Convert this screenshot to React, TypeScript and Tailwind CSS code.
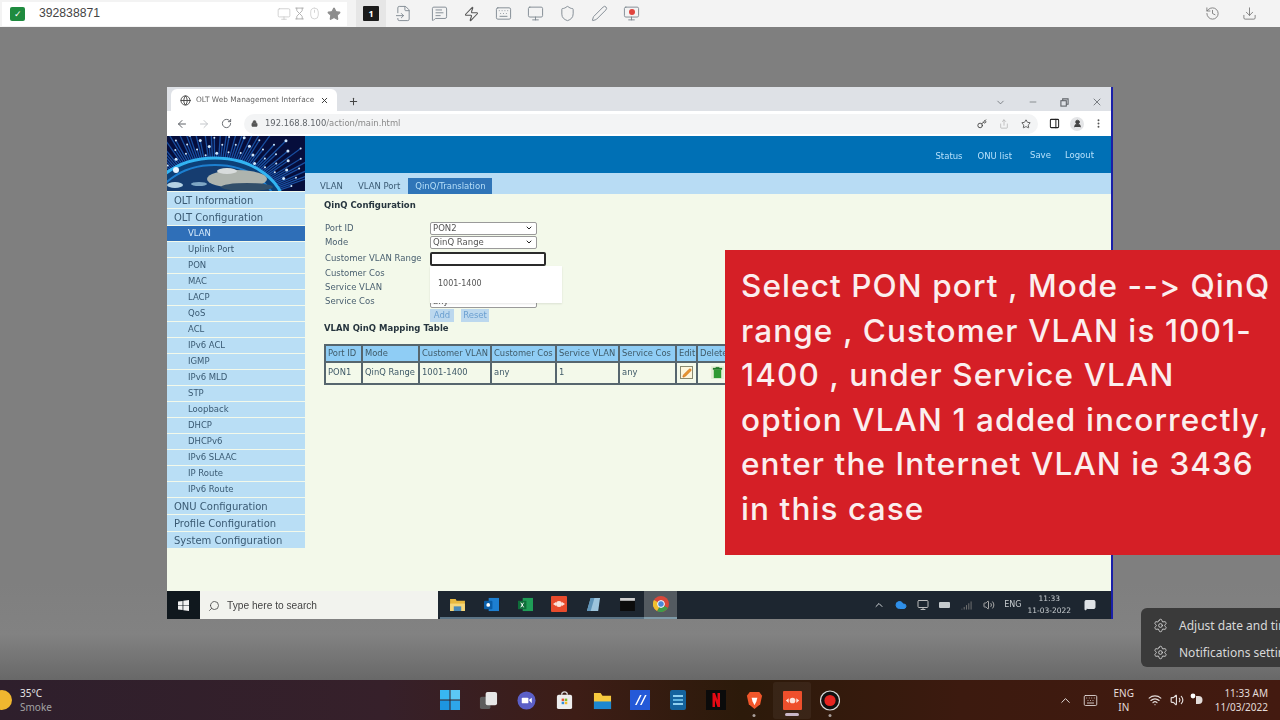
import {
  ArrowLeft,
  ArrowRight,
  ChevronDown,
  ChevronUp,
  Cloud,
  Download,
  Hourglass,
  History,
  Key,
  Lock,
  Monitor,
  MessageSquareText,
  Mouse,
  PanelRight,
  Pen,
  Plus,
  RotateCw,
  Search,
  Settings,
  Share,
  Shield,
  Star,
  UserRound,
  Volume2,
  Wifi,
  X,
  Minus,
  Zap,
  FileInput,
  Keyboard,
  MoreVertical,
  Globe,
  Signal,
  MessageSquare,
} from "lucide-react";

const subItems = [
  "Uplink Port",
  "PON",
  "MAC",
  "LACP",
  "QoS",
  "ACL",
  "IPv6 ACL",
  "IGMP",
  "IPv6 MLD",
  "STP",
  "Loopback",
  "DHCP",
  "DHCPv6",
  "IPv6 SLAAC",
  "IP Route",
  "IPv6 Route",
];

function GlobeBanner() {
  const streaks = [];
  for (let i = 0; i < 90; i++) {
    const a = Math.PI * 1.02 + (i / 90) * Math.PI * 0.86;
    const r2 = 1.06 + ((i * 37) % 23) * 0.032;
    const x1 = 48 + Math.cos(a) * 70;
    const y1 = 75 + Math.sin(a) * 53;
    const x2 = 48 + Math.cos(a) * 70 * r2;
    const y2 = 75 + Math.sin(a) * 53 * r2;
    streaks.push(
      <g key={i}>
        <line x1={x1} y1={y1} x2={x2} y2={y2} stroke="#2169c9" strokeWidth="1.3" opacity="0.7" />
        <circle cx={x2} cy={y2} r={i % 3 === 0 ? 1.5 : 1} fill="#cfe9ff" />
      </g>
    );
  }
  return (
    <svg viewBox="0 0 138 55" className="h-[55px] w-[138px] shrink-0 bg-[#060e3c]">
      <defs>
        <filter id="soft">
          <feGaussianBlur stdDeviation="0.7" />
        </filter>
      </defs>
      <g filter="url(#soft)">
        {streaks}
        <ellipse cx="48" cy="75" rx="70" ry="53" fill="#0f3f77" stroke="#31b4f2" strokeWidth="3" />
        <ellipse cx="48" cy="75" rx="62" ry="46" fill="#123e70" stroke="#1e7fd0" strokeWidth="2" />
        <ellipse cx="70" cy="43" rx="30" ry="9" fill="#aeb4ae" />
        <ellipse cx="60" cy="35" rx="10" ry="3" fill="#d8dcdc" />
        <ellipse cx="80" cy="51" rx="26" ry="4" fill="#33506a" />
        <circle cx="9" cy="34" r="3" fill="#e8f4ff" />
        <ellipse cx="8" cy="49" rx="8" ry="3" fill="#b5d2e4" />
        <ellipse cx="32" cy="48" rx="8" ry="2" fill="#7ea6c4" />
      </g>
    </svg>
  );
}

function TopBarIcons() {
  const cls = "h-[17px] w-[17px] text-[#7d8790]";
  return (
    <div className="flex h-full items-center">
      <div className="flex h-full w-[30px] items-center justify-center bg-[#e6e6e6]">
        <div className="flex h-[15px] w-[16px] items-center justify-center rounded-[1px] bg-[#1b1b1b] text-[9px] font-bold text-white">
          1
        </div>
      </div>
      <div className="ml-[9px] flex items-center gap-[15px]">
        <FileInput className={`${cls} mr-[4px]`} strokeWidth={1.3} />
        <MessageSquareText className={cls} strokeWidth={1.3} />
        <Zap className="h-[16px] w-[17px] text-[#555]" strokeWidth={1.6} />
        <Keyboard className={cls} strokeWidth={1.3} />
        <Monitor className={cls} strokeWidth={1.3} />
        <Shield className={cls} strokeWidth={1.3} />
        <Pen className={cls} strokeWidth={1.3} />
        <div className="relative flex h-[17px] w-[17px] items-center justify-center">
          <Monitor className={cls} strokeWidth={1.3} />
          <span className="absolute left-[6px] top-[4px] h-[6px] w-[6px] rounded-full bg-[#e0443e]" />
        </div>
      </div>
    </div>
  );
}

function TopBar() {
  return (
    <div className="flex h-[27px] shrink-0 items-center bg-[#f3f3f3]">
      <div className="ml-[2px] flex h-[24px] w-[345px] items-center bg-white">
        <div className="ml-[8px] flex h-[14px] w-[15px] items-center justify-center rounded-[2px] bg-[#1f8b3f] text-[9px] text-white">
          ✓
        </div>
        <span className="ml-[14px] text-[12.2px] text-[#444] [font-family:'Liberation_Sans',sans-serif]">392838871</span>
        <div className="ml-auto mr-[6px] flex items-center text-[#c9c9c9]">
          <Monitor className="h-[14px] w-[14px]" strokeWidth={1.4} />
          <Hourglass className="ml-[2px] h-[13px] w-[13px] text-[#a8a8a8]" strokeWidth={1.6} />
          <Mouse className="ml-[2px] h-[13px] w-[13px]" strokeWidth={1.4} />
          <Star className="ml-[6px] h-[14px] w-[14px] fill-[#8d8d8d] text-[#8d8d8d]" />
        </div>
      </div>
      <div className="ml-[9px] h-full">
        <TopBarIcons />
      </div>
      <div className="ml-auto mr-[23px] flex items-center gap-[22px] text-[#777]">
        <History className="h-[15px] w-[15px]" strokeWidth={1.4} />
        <Download className="h-[15px] w-[15px]" strokeWidth={1.4} />
      </div>
    </div>
  );
}

function BrowserChrome() {
  return (
    <>
      <div className="flex h-[24px] shrink-0 items-end bg-[#dee1e6] text-[#5f6368]">
        <div className="ml-[4px] flex h-[22px] w-[166px] items-center rounded-t-[6px] bg-white pl-[9px] pr-[8px]">
          <Globe className="h-[11px] w-[11px] shrink-0 text-[#444]" strokeWidth={2} />
          <span className="ml-[5px] whitespace-nowrap text-[7.4px] text-[#666]">OLT Web Management Interface</span>
          <X className="ml-auto h-[9px] w-[9px] shrink-0 text-[#333]" strokeWidth={2.5} />
        </div>
        <Plus className="mb-[4px] ml-[11px] h-[11px] w-[11px] text-[#444]" strokeWidth={2.2} />
        <div className="mb-[3px] ml-auto mr-[8px] flex items-center gap-[22px]">
          <ChevronDown className="h-[11px] w-[11px]" strokeWidth={1.6} />
          <Minus className="h-[10px] w-[10px]" strokeWidth={1.6} />
          <svg viewBox="0 0 10 10" className="h-[9px] w-[9px]" fill="none" stroke="currentColor" strokeWidth="1.2">
            <rect x="1" y="3" width="6" height="6" />
            <path d="M3 3V1h6v6H7" />
          </svg>
          <X className="h-[12px] w-[12px]" strokeWidth={1.6} />
        </div>
      </div>
      <div className="flex h-[25px] shrink-0 items-center bg-white text-[#5f6368]">
        <ArrowLeft className="ml-[9px] h-[12px] w-[12px] shrink-0" strokeWidth={2} />
        <ArrowRight className="ml-[10px] h-[12px] w-[12px] shrink-0 text-[#c4c7cb]" strokeWidth={2} />
        <RotateCw className="ml-[11px] h-[11px] w-[11px] shrink-0" strokeWidth={2} />
        <div className="ml-[12px] flex h-[20px] w-[794px] shrink-0 items-center rounded-full bg-[#f3f4f5] px-[7px]">
          <Lock className="h-[7px] w-[7px] shrink-0 fill-[#555] text-[#555]" />
          <span className="ml-[7px] text-[8.4px] text-[#5f6368]">
            192.168.8.100<span className="text-[#888]">/action/main.html</span>
          </span>
          <div className="ml-auto flex items-center gap-[12px]">
            <Key className="h-[10px] w-[10px] text-[#444]" strokeWidth={2.2} />
            <Share className="h-[10px] w-[10px] text-[#aaa]" strokeWidth={1.6} />
            <Star className="h-[10px] w-[10px] text-[#444]" strokeWidth={2} />
          </div>
        </div>
        <PanelRight className="ml-[11px] h-[11px] w-[11px] shrink-0 text-[#222]" strokeWidth={2.2} />
        <div className="ml-[10px] flex h-[14px] w-[14px] shrink-0 items-center justify-center rounded-full bg-[#e4e5e7]">
          <UserRound className="h-[9px] w-[9px] fill-[#444] text-[#444]" />
        </div>
        <MoreVertical className="ml-[9px] h-[11px] w-[11px] shrink-0 text-[#555]" strokeWidth={2.2} />
      </div>
    </>
  );
}

function Sidebar() {
  const mainCls =
    "flex h-[16px] shrink-0 items-center bg-[#b9def5] pl-[7px] text-[10px] text-[#3a5a73]";
  const subCls =
    "flex h-[15px] shrink-0 items-center bg-[#b9def5] pl-[21px] text-[8.5px] text-[#3a5a73]";
  return (
    <div className="flex w-[138px] shrink-0 flex-col bg-[#f3f9ea] [font-family:'DejaVu_Sans',sans-serif]">
      <GlobeBanner />
      <div className="mt-[1px] flex flex-col gap-[1px]">
        <div className={mainCls}>OLT Information</div>
        <div className={mainCls}>OLT Configuration</div>
        <div className="flex h-[15px] items-center bg-[#2f6fb8] pl-[21px] text-[8.5px] text-[#d5eafb]">VLAN</div>
        {subItems.map((s) => (
          <div key={s} className={subCls}>
            {s}
          </div>
        ))}
        <div className={mainCls}>ONU Configuration</div>
        <div className={mainCls}>Profile Configuration</div>
        <div className={mainCls}>System Configuration</div>
      </div>
    </div>
  );
}

function FakeSelect({ value }: { value: string }) {
  return (
    <div className="flex h-[13px] w-[107px] items-center justify-between rounded-[2px] border border-[#9a9a9a] bg-white pl-[2px] pr-[3px] text-[8.5px] text-[#555]">
      <span>{value}</span>
      <ChevronDown className="h-[8px] w-[8px] text-[#222]" strokeWidth={3} />
    </div>
  );
}

function MappingTable() {
  const headCls = "border-2 border-[#56666e] bg-[#8fcdf5] px-[2px] text-left font-normal";
  const cellCls = "border-2 border-[#56666e] px-[2px] text-left font-normal";
  return (
    <table className="mt-[9px] w-[412px] table-fixed border-collapse text-[8.4px] text-[#3f5a68]">
      <colgroup>
        <col className="w-[37px]" />
        <col className="w-[57px]" />
        <col className="w-[72px]" />
        <col className="w-[65px]" />
        <col className="w-[63px]" />
        <col className="w-[57px]" />
        <col className="w-[21px]" />
        <col className="w-[40px]" />
      </colgroup>
      <thead>
        <tr className="h-[17px] whitespace-nowrap">
          <th className={headCls}>Port ID</th>
          <th className={headCls}>Mode</th>
          <th className={headCls}>Customer VLAN</th>
          <th className={headCls}>Customer Cos</th>
          <th className={headCls}>Service VLAN</th>
          <th className={headCls}>Service Cos</th>
          <th className={headCls}>Edit</th>
          <th className={headCls}>Delete</th>
        </tr>
      </thead>
      <tbody>
        <tr className="h-[22px] whitespace-nowrap">
          <td className={cellCls}>PON1</td>
          <td className={cellCls}>QinQ Range</td>
          <td className={cellCls}>1001-1400</td>
          <td className={cellCls}>any</td>
          <td className={cellCls}>1</td>
          <td className={cellCls}>any</td>
          <td className={cellCls}>
            <div className="mx-auto flex h-[13px] w-[13px] items-center justify-center border border-[#8a8a70] bg-[#fdf6dc]">
              <Pen className="h-[10px] w-[10px] fill-[#e8962e] text-[#c9691a]" strokeWidth={1.5} />
            </div>
          </td>
          <td className={cellCls}>
            <svg viewBox="0 0 14 14" className="mx-auto h-[13px] w-[13px]">
              <rect width="14" height="14" fill="#e4eed6" />
              <rect x="3" y="4" width="8" height="9" fill="#2f9a32" />
              <rect x="2" y="2" width="10" height="2" fill="#1f7a28" />
              <rect x="5" y="1" width="4" height="1" fill="#1f7a28" />
            </svg>
          </td>
        </tr>
      </tbody>
    </table>
  );
}

function MainPanel() {
  return (
    <div className="flex min-w-0 flex-1 flex-col bg-[#f3f9ea] [font-family:'DejaVu_Sans',sans-serif]">
      <div className="flex h-[37px] shrink-0 items-center justify-end bg-[#0070b5] pr-[17px] pt-[3px] text-[8.5px] text-[#b5e0fb]">
        <span>Status</span>
        <span className="ml-[15px]">ONU list</span>
        <span className="ml-[18px] mb-[2px]">Save</span>
        <span className="ml-[14px] mb-[2px]">Logout</span>
      </div>
      <div className="flex h-[21px] shrink-0 items-end bg-[#b8dcf4] pl-[15px] text-[8.5px] text-[#3a5a73]">
        <span className="mb-[1px]">VLAN</span>
        <span className="mb-[1px] ml-[15px]">VLAN Port</span>
        <span className="ml-[8px] flex h-[16px] w-[84px] items-center justify-center bg-[#2f75b8] text-[#b5def8]">
          QinQ/Translation
        </span>
      </div>
      <div className="flex flex-col pl-[19px] text-[#4a6070]">
        <div className="mt-[5px] text-[8.5px] font-bold text-[#26353e]">QinQ Configuration</div>
        <div className="mt-[10px] grid grid-cols-[105px_1fr] items-center gap-y-[1px] pl-[1px] text-[8.5px]">
          <span>Port ID</span>
          <FakeSelect value="PON2" />
          <span>Mode</span>
          <FakeSelect value="QinQ Range" />
          <span className="mt-[2px]">Customer VLAN Range</span>
          <div className="relative mt-[2px]">
            <div className="h-[14px] w-[116px] rounded-[2px] border-2 border-[#2b2b2b] bg-white" />
            <div className="absolute left-0 top-[14px] z-10 flex h-[37px] w-[132px] items-center bg-white pl-[8px] text-[8px] text-[#555] shadow-[0_1px_2px_rgba(0,0,0,0.1)]">
              1001-1400
            </div>
          </div>
          <span className="h-[13px] leading-[13px]">Customer Cos</span>
          <div className="h-[13px]" />
          <span className="h-[13px] leading-[13px]">Service VLAN</span>
          <div className="h-[13px]" />
          <span>Service Cos</span>
          <FakeSelect value="any" />
          <div />
          <div className="flex gap-[7px] text-[#6a9fd0]">
            <span className="flex h-[13px] w-[24px] items-center justify-center bg-[#bcd8ee]">Add</span>
            <span className="flex h-[13px] w-[28px] items-center justify-center bg-[#bcd8ee]">Reset</span>
          </div>
        </div>
        <div className="text-[8.5px] font-bold text-[#26353e]">VLAN QinQ Mapping Table</div>
        <MappingTable />
      </div>
    </div>
  );
}

function TrayApp({ children }: { children: React.ReactNode }) {
  return (
    <div className="flex w-[34px] items-center justify-center border-b-2 border-[#5b7486]">
      <div className="flex items-center justify-center">{children}</div>
    </div>
  );
}

function WindowTaskbar() {
  return (
    <div className="flex h-[28px] shrink-0 items-stretch bg-[#1d2630]">
      <div className="flex w-[33px] items-center justify-center bg-[#10181e]">
        <svg viewBox="0 0 12 12" className="h-[11px] w-[11px]" fill="#f2f2f2">
          <path d="M0 1.6 5 1v4.6H0zM5.8 .9 12 0v5.6H5.8zM0 6.4h5V11l-5-.7zM5.8 6.4H12V12l-6.2-.9z" />
        </svg>
      </div>
      <div className="flex w-[238px] items-center bg-[#f2f3ee] pl-[8px] pt-[1px] text-[10.2px] text-[#444] [font-family:'Liberation_Sans',sans-serif]">
        <Search className="h-[12px] w-[12px] -scale-x-100 text-[#444]" strokeWidth={1.6} />
        <span className="ml-[7px]">Type here to search</span>
      </div>
      <div className="ml-[2px] flex items-stretch">
        <TrayApp>
          <svg viewBox="0 0 16 14" className="h-[13px] w-[15px]">
            <path d="M0 1h6l1 2h9v11H0z" fill="#e8b93f" />
            <rect x="0" y="6" width="16" height="8" fill="#f5d77a" />
            <rect x="4" y="9" width="8" height="5" fill="#4a8ab8" />
          </svg>
        </TrayApp>
        <TrayApp>
          <svg viewBox="0 0 16 16" className="h-[15px] w-[15px]">
            <rect x="5" y="1" width="11" height="14" fill="#1d7fd1" />
            <rect y="4" width="9" height="9" rx="1" fill="#0a5ea8" />
            <circle cx="4.5" cy="8.5" r="2" fill="#fff" />
          </svg>
        </TrayApp>
        <TrayApp>
          <svg viewBox="0 0 16 16" className="h-[15px] w-[15px]">
            <rect x="5" y="1" width="11" height="14" fill="#1f9d57" />
            <rect y="4" width="9" height="9" fill="#0f6e3a" />
            <path d="M3 6l3 5M6 6l-3 5" stroke="#fff" strokeWidth="1" />
          </svg>
        </TrayApp>
        <TrayApp>
          <svg viewBox="0 0 16 16" className="h-[16px] w-[16px]">
            <rect width="16" height="16" rx="1" fill="#e84b2c" />
            <circle cx="8" cy="8" r="3" fill="#fbe4dc" />
            <path d="M2 8l3-2v4zM14 8l-3-2v4z" fill="#fbe4dc" />
          </svg>
        </TrayApp>
        <TrayApp>
          <svg viewBox="0 0 16 16" className="h-[15px] w-[15px]">
            <path d="M5 1h10l-2 14H1z" fill="#9cc4dc" />
            <path d="M5 1h4L5 15H1z" fill="#5f94b8" />
          </svg>
        </TrayApp>
        <TrayApp>
          <svg viewBox="0 0 16 14" className="h-[13px] w-[15px]">
            <rect width="16" height="14" fill="#0c0c0c" />
            <rect width="16" height="3" fill="#cfcfcf" />
          </svg>
        </TrayApp>
        <div className="flex w-[33px] items-center justify-center border-b-2 border-[#7e9aa8] bg-[#535a60]">
          <svg viewBox="0 0 16 16" className="h-[16px] w-[16px]">
            <circle cx="8" cy="8" r="8" fill="#d8483a" />
            <path d="M8 8 15 12A8 8 0 0 1 4 15z" fill="#3f9b4a" />
            <path d="M8 8 4 15A8 8 0 0 1 1 4z" fill="#f0bf2e" />
            <circle cx="8" cy="8" r="3.4" fill="#4a86d8" stroke="#fff" strokeWidth="1" />
          </svg>
        </div>
      </div>
      <div className="ml-auto flex items-center pr-[15px] text-[#d0d5d8]">
        <ChevronUp className="ml-[2px] h-[12px] w-[12px]" strokeWidth={2} />
        <Cloud className="ml-[10px] h-[12px] w-[12px] fill-[#2f8fe8] text-[#2f8fe8]" />
        <Monitor className="ml-[10px] h-[12px] w-[12px] text-[#bbb]" strokeWidth={2} />
        <div className="ml-[10px] h-[6px] w-[11px] rounded-[1px] bg-[#c4c9cc]" />
        <Signal className="ml-[11px] h-[11px] w-[11px] text-[#777]" strokeWidth={2} />
        <Volume2 className="ml-[11px] h-[12px] w-[12px] text-[#aaa]" strokeWidth={2} />
        <span className="ml-[9px] text-[8px] text-[#c8cdd0]">ENG</span>
        <div className="ml-[6px] flex flex-col items-center text-[7.5px] leading-[12px] text-[#c8cdd0]">
          <span>11:33</span>
          <span>11-03-2022</span>
        </div>
        <MessageSquare className="ml-[13px] h-[12px] w-[12px] fill-[#dfe3e6] text-[#dfe3e6]" />
      </div>
    </div>
  );
}

function DesktopTaskbar() {
  const dot = "absolute bottom-[-6px] left-1/2 h-[3px] w-[3px] -translate-x-1/2 rounded-full bg-[#a9a09c]";
  const apps = (
    <div className="flex items-center gap-[18px]">
      <div className="flex w-[20px] justify-center">
        <svg viewBox="0 0 20 20" className="h-[20px] w-[20px]">
          <rect width="9.5" height="9.5" fill="#38b6f0" />
          <rect x="10.5" width="9.5" height="9.5" fill="#5cc8f5" />
          <rect y="10.5" width="9.5" height="9.5" fill="#1d95e0" />
          <rect x="10.5" y="10.5" width="9.5" height="9.5" fill="#2ea6ea" />
        </svg>
      </div>
      <div className="flex w-[20px] justify-center">
        <svg viewBox="0 0 20 20" className="h-[19px] w-[19px]">
          <rect x="1" y="6" width="11" height="13" rx="2" fill="#5d5d5d" />
          <rect x="7" y="1" width="12" height="14" rx="2" fill="#e6e6e6" />
        </svg>
      </div>
      <div className="flex w-[20px] justify-center">
        <svg viewBox="0 0 20 20" className="h-[19px] w-[19px]">
          <circle cx="10" cy="10" r="9.5" fill="#5b5fc7" />
          <rect x="5" y="7" width="7" height="6" rx="1" fill="#fff" />
          <path d="M12.5 9.5 15.5 7v6z" fill="#fff" />
        </svg>
      </div>
      <div className="flex w-[20px] justify-center">
        <svg viewBox="0 0 20 20" className="h-[19px] w-[19px]">
          <rect x="2" y="4" width="16" height="15" rx="2" fill="#eee" />
          <path d="M7 4a3 3 0 0 1 6 0" fill="none" stroke="#ddd" strokeWidth="1.4" />
          <rect x="7" y="8" width="2.6" height="2.6" fill="#e8502f" />
          <rect x="10.3" y="8" width="2.6" height="2.6" fill="#7db82f" />
          <rect x="7" y="11.3" width="2.6" height="2.6" fill="#2f8fe0" />
          <rect x="10.3" y="11.3" width="2.6" height="2.6" fill="#f5bb2a" />
        </svg>
      </div>
      <div className="flex w-[20px] justify-center">
        <svg viewBox="0 0 20 20" className="h-[19px] w-[19px]">
          <path d="M1 2h7l2 3h9v14H1z" fill="#f7c93e" />
          <rect x="1" y="11" width="18" height="8" fill="#1d87d0" />
        </svg>
      </div>
      <div className="flex w-[20px] justify-center">
        <svg viewBox="0 0 20 20" className="h-[20px] w-[20px]">
          <rect width="20" height="20" fill="#2459d8" />
          <path d="M5 15 10 5h1.6l-5 10zM10 15l5-10h1.6l-5 10z" fill="#fff" />
        </svg>
      </div>
      <div className="flex w-[20px] justify-center">
        <svg viewBox="0 0 20 20" className="h-[20px] w-[20px]">
          <rect x="2" width="16" height="20" rx="2" fill="#14639e" />
          <rect x="5" y="5" width="10" height="2" fill="#8fd0f0" />
          <rect x="5" y="9" width="10" height="2" fill="#5fb4e0" />
          <rect x="5" y="13" width="10" height="2" fill="#8fd0f0" />
        </svg>
      </div>
      <div className="flex w-[20px] justify-center">
        <svg viewBox="0 0 20 20" className="h-[20px] w-[20px]">
          <rect width="20" height="20" fill="#0b0b0b" />
          <path d="M6.5 3H9l2.5 7V3H14v14h-2.5L9 10v7H6.5z" fill="#e50914" />
        </svg>
      </div>
      <div className="relative flex w-[20px] justify-center">
        <svg viewBox="0 0 20 20" className="h-[21px] w-[19px]">
          <path d="M5 1h10l3 4-2 9-6 5-6-5-2-9z" fill="#f0562a" />
          <path d="M7 7h6l-1 4-2 4-2-4z" fill="#fff" />
        </svg>
        <span className={dot} />
      </div>
      <div className="relative flex w-[20px] justify-center">
        <div className="absolute -inset-y-[9px] -inset-x-[9px] rounded-[3px] bg-white/5" />
        <svg viewBox="0 0 20 20" className="relative h-[19px] w-[19px]">
          <rect width="20" height="20" rx="1" fill="#ee4f2c" />
          <circle cx="10" cy="10" r="3" fill="#fbe4dc" />
          <path d="M3 10l3-2.5v5zM17 10l-3-2.5v5z" fill="#fbe4dc" />
        </svg>
        <span className="absolute bottom-[-6px] left-1/2 h-[3px] w-[14px] -translate-x-1/2 rounded-full bg-[#c9b8c9]" />
      </div>
      <div className="relative flex w-[20px] justify-center">
        <svg viewBox="0 0 20 20" className="h-[21px] w-[21px]">
          <circle cx="10" cy="10" r="9.5" fill="#111" stroke="#d8d8d8" strokeWidth="1.2" />
          <circle cx="10" cy="10" r="5.6" fill="#e62420" />
        </svg>
        <span className={dot} />
      </div>
    </div>
  );
  return (
    <div className="flex h-[40px] shrink-0 items-center bg-[linear-gradient(90deg,#2e1f2c_0%,#36202a_30%,#3d1d16_45%,#2c1a0a_58%,#3c1a0f_75%,#431a10_100%)] text-white [font-family:'Noto_Sans',sans-serif]">
      <div className="flex w-[440px] items-center">
        <div className="ml-[-8px] h-[20px] w-[20px] rounded-full bg-[#f0b72f]" />
        <div className="ml-[8px] flex flex-col text-[10px] leading-[14px]">
          <span className="text-[#e5e5e5]">35°C</span>
          <span className="text-[#a3a3a3]">Smoke</span>
        </div>
      </div>
      {apps}
      <div className="ml-auto flex items-center text-[#e3dcda]">
        <ChevronUp className="h-[15px] w-[15px]" strokeWidth={1.6} />
        <Keyboard className="ml-[10px] h-[15px] w-[15px]" strokeWidth={1.4} />
        <div className="ml-[14px] flex w-[24px] flex-col items-center text-[10px] leading-[14px]">
          <span>ENG</span>
          <span>IN</span>
        </div>
        <Wifi className="ml-[12px] h-[14px] w-[14px]" strokeWidth={2} />
        <Volume2 className="ml-[8px] h-[14px] w-[14px]" strokeWidth={2} />
        <svg viewBox="0 0 14 14" className="ml-[6px] h-[14px] w-[14px]" fill="none">
          <circle cx="3" cy="3" r="2.4" fill="#fff" />
          <path d="M6 3h2.5a4 4 0 0 1 0 8H6z" fill="#e3dcda" />
        </svg>
        <div className="ml-[11px] mr-[12px] flex flex-col items-end text-[10px] leading-[14px]">
          <span>11:33 AM</span>
          <span>11/03/2022</span>
        </div>
      </div>
    </div>
  );
}

export default function App() {
  return (
    <div className="relative flex h-[720px] w-[1280px] flex-col overflow-hidden bg-[#808080]">
      <TopBar />
      <div className="relative flex-1 bg-[linear-gradient(180deg,#7f7f7f_0%,#7f7f7f_85%,#828282_93%,#686868_100%)]">
        {/* remote desktop window */}
        <div className="absolute left-[167px] top-[60px] flex h-[532px] w-[946px] flex-col overflow-hidden border-r-2 border-[#1a1fa8] bg-white blur-[0.3px] [font-family:'DejaVu_Sans',sans-serif]">
          <BrowserChrome />
          <div className="flex min-h-0 flex-1">
            <Sidebar />
            <MainPanel />
          </div>
          <WindowTaskbar />
        </div>

        {/* caption */}
        <div className="absolute left-[725px] top-[223px] h-[305px] w-[555px] bg-[#d51f26] py-[14px] pl-[16px] text-[31.5px] font-medium leading-[44.6px] tracking-[1.1px] text-[#fbeeee] [font-family:'Inter',sans-serif]">
          <p className="whitespace-nowrap">Select PON port , Mode --&gt; QinQ</p>
          <p className="whitespace-nowrap">range , Customer VLAN is 1001-</p>
          <p className="whitespace-nowrap">1400 , under Service VLAN</p>
          <p className="whitespace-nowrap">option VLAN 1 added incorrectly,</p>
          <p className="whitespace-nowrap">enter the Internet VLAN ie 3436</p>
          <p className="whitespace-nowrap">in this case</p>
        </div>

        {/* notification menu */}
        <div className="absolute left-[1141px] top-[581px] flex h-[59px] w-[150px] flex-col justify-center gap-[9px] rounded-[6px] bg-[#3a3a3a] pl-[12px] pt-[3px] text-[12px] text-[#d8d8d8] [font-family:'Noto_Sans',sans-serif]">
          <div className="flex items-center gap-[11px] whitespace-nowrap">
            <Settings className="h-[15px] w-[15px] shrink-0" strokeWidth={1.4} />
            Adjust date and time
          </div>
          <div className="flex items-center gap-[11px] whitespace-nowrap">
            <Settings className="h-[15px] w-[15px] shrink-0" strokeWidth={1.4} />
            Notifications settings
          </div>
        </div>
      </div>
      <DesktopTaskbar />
    </div>
  );
}
